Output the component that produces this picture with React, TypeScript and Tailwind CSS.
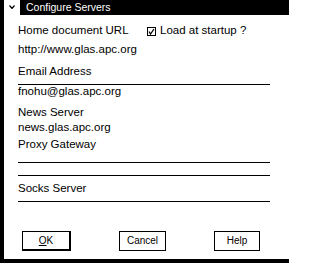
import React from 'react'

const font = { fontFamily: '"Liberation Sans", Arial, sans-serif' }

function Field({ top, bottom, children }: { top?: boolean; bottom?: boolean; children?: React.ReactNode }) {
  return (
    <div
      className={`h-[14px] w-[252px] flex items-center leading-none ${top ? 'border-t border-black' : ''} ${bottom ? 'border-b border-black' : ''}`}
    >
      {children}
    </div>
  )
}

export default function App() {
  return (
    <div className="w-[289px] h-[263px] bg-white border-l-4 border-b-4 border-black flex flex-col text-black" style={font}>
      {/* title bar */}
      <div className="h-[15px] flex shrink-0">
        <div className="w-[16px] bg-white flex items-start justify-center pt-[5px]">
          <svg width="6" height="4" viewBox="0 0 6 4">
            <polyline points="0.5,0.5 3,3.5 5.5,0.5" fill="none" stroke="black" strokeWidth="1.2" />
          </svg>
        </div>
        <div className="flex-1 bg-black text-white text-[10.5px] leading-none flex items-center pl-[6px]">
          Configure Servers
        </div>
      </div>

      <div className="flex flex-col pl-[14px] text-[11.5px] leading-none">
        <div className="h-[14px] mt-[9px] flex items-center">
          <span className="w-[129px]">Home document URL</span>
          <svg width="9" height="9" viewBox="0 0 9 9" className="shrink-0">
            <rect x="0.5" y="0.5" width="8" height="8" fill="white" stroke="black" />
            <polyline points="2,4.5 3.5,7 7,2" fill="none" stroke="black" strokeWidth="1.3" />
          </svg>
          <span className="ml-[4px]">Load at startup ?</span>
        </div>
        <div className="h-[14px] mt-[5px] flex items-center">http://www.glas.apc.org</div>
        <div className="h-[14px] mt-[8px] flex items-center">Email Address</div>
        <div className="mt-[5px]">
          <Field top>fnohu@glas.apc.org</Field>
        </div>
        <div className="h-[14px] mt-[8px] flex items-center">News Server</div>
        <div className="h-[14px] mt-[1px] flex items-center">news.glas.apc.org</div>
        <div className="h-[14px] mt-[3px] flex items-center">Proxy Gateway</div>
        <div className="mt-[10px]">
          <Field top bottom />
        </div>
        <div className="h-[14px] mt-[6px] flex items-center">Socks Server</div>
        <div className="w-[252px] border-t border-black mt-[5px]" />
      </div>

      <div className="flex pl-[18px] gap-[48px] mt-[29px] text-[10px] leading-none">
        <button className="w-[49px] h-[20px] border border-black border-r-2 border-b-2 flex items-center justify-center">
          <span>
            <span className="underline">O</span>K
          </span>
        </button>
        <button className="w-[47px] h-[20px] border border-black flex items-center justify-center">Cancel</button>
        <button className="w-[46px] h-[20px] border border-black flex items-center justify-center">Help</button>
      </div>
    </div>
  )
}
